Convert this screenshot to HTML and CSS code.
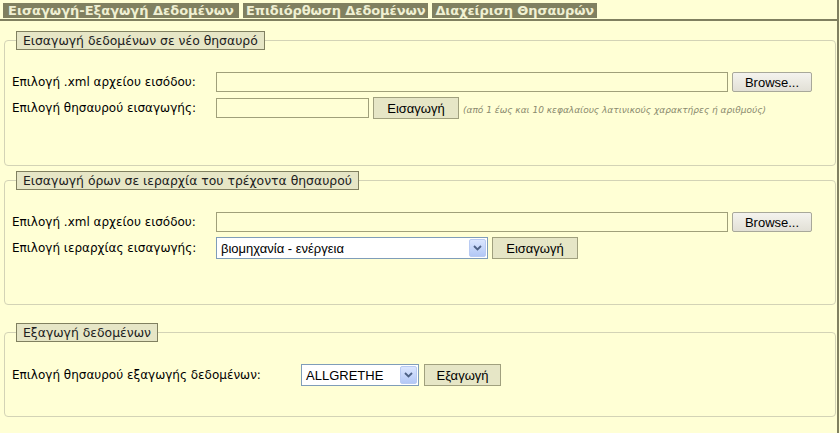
FILE: index.html
```html
<!DOCTYPE html>
<html lang="el">
<head>
<meta charset="utf-8">
<title>Εισαγωγή-Εξαγωγή Δεδομένων</title>
<link rel="stylesheet" href="styles.css">
</head>
<body>
<div class="page">
  <nav class="tabs">
    <a class="tab">Εισαγωγή-Εξαγωγή Δεδομένων</a>
    <a class="tab tab-sm">Επιδιόρθωση Δεδομένων</a>
    <a class="tab tab-sm">Διαχείριση Θησαυρών</a>
  </nav>
  <div class="content">
    <fieldset class="box box-new">
      <legend>Εισαγωγή δεδομένων σε νέο θησαυρό</legend>
      <div class="rows">
        <div class="row">
          <label class="lbl">Επιλογή .xml αρχείου εισόδου:</label>
          <input class="txt file" type="text">
          <button class="browse" type="button">Browse...</button>
        </div>
        <div class="row">
          <label class="lbl">Επιλογή θησαυρού εισαγωγής:</label>
          <input class="txt short" type="text">
          <button class="btn btn-import" type="button">Εισαγωγή</button>
          <span class="note">(από 1 έως και 10 κεφαλαίους λατινικούς χαρακτήρες ή αριθμούς)</span>
        </div>
      </div>
    </fieldset>

    <fieldset class="box box-terms">
      <legend>Εισαγωγή όρων σε ιεραρχία του τρέχοντα θησαυρού</legend>
      <div class="rows">
        <div class="row">
          <label class="lbl">Επιλογή .xml αρχείου εισόδου:</label>
          <input class="txt file" type="text">
          <button class="browse" type="button">Browse...</button>
        </div>
        <div class="row">
          <label class="lbl">Επιλογή ιεραρχίας εισαγωγής:</label>
          <div class="select sel-wide">
            <span class="sel-text">βιομηχανία - ενέργεια</span>
            <span class="sel-arrow"><svg width="9" height="6" viewBox="0 0 9 6"><path d="M1 1 L4.5 4.5 L8 1" fill="none" stroke="#4d6185" stroke-width="1.8"/></svg></span>
          </div>
          <button class="btn btn-import" type="button">Εισαγωγή</button>
        </div>
      </div>
    </fieldset>

    <fieldset class="box box-export">
      <legend>Εξαγωγή δεδομένων</legend>
      <div class="rows">
        <div class="row">
          <label class="lbl lbl-wide">Επιλογή θησαυρού εξαγωγής δεδομένων:</label>
          <div class="select sel-narrow">
            <span class="sel-text">ALLGRETHE</span>
            <span class="sel-arrow"><svg width="9" height="6" viewBox="0 0 9 6"><path d="M1 1 L4.5 4.5 L8 1" fill="none" stroke="#4d6185" stroke-width="1.8"/></svg></span>
          </div>
          <button class="btn btn-export" type="button">Εξαγωγή</button>
        </div>
      </div>
    </fieldset>
  </div>
</div>
</body>
</html>
```

FILE: styles.css
```css
html, body {
  margin: 0;
  padding: 0;
}

body {
  background: #ffffd5;
  font-family: "DejaVu Sans", Verdana, sans-serif;
  color: #000;
}

.page {
  box-sizing: border-box;
  width: 839px;
  min-height: 433px;
  border-right: 2px solid #808060;
}

.tabs {
  display: flex;
  gap: 4px;
  padding: 3px 0 1px 3px;
  border-bottom: 2px solid #808060;
}

.tab {
  background: #808060;
  color: #f0f0d2;
  font-weight: bold;
  font-size: 13px;
  height: 15px;
  line-height: 15px;
  padding: 0 5px;
  white-space: nowrap;
}

.tab-sm {
  padding: 0 3px;
  letter-spacing: -0.1px;
}

.content {
  padding: 10px 1px 0 4px;
}

.box {
  margin: 0;
  border: 1px solid #d3d3b6;
  border-radius: 4px;
  padding: 0 7px;
}

.box-new {
  padding-bottom: 46px;
}

.box-terms {
  margin-top: 5px;
  padding-bottom: 45px;
}

.box-export {
  margin-top: 18px;
  padding-bottom: 30px;
}

legend {
  box-sizing: border-box;
  margin-left: 4px;
  height: 19px;
  line-height: 17px;
  padding: 0 6px;
  background: #e6e6c6;
  border: 1px solid #808060;
  font-size: 12.4px;
  color: #202020;
}

.rows {
  display: flex;
  flex-direction: column;
  gap: 5px;
  margin-top: 22px;
}

.row {
  display: flex;
  align-items: center;
  gap: 4px;
  font-size: 12px;
}

.lbl {
  width: 200px;
  flex: none;
  white-space: nowrap;
}

.lbl-wide {
  width: 285px;
}

.txt {
  box-sizing: border-box;
  height: 20px;
  border: 1px solid #a0a07a;
  background: transparent;
  margin: 0;
  padding: 0 2px;
}

.file {
  width: 512px;
}

.short {
  width: 153px;
}

.browse {
  box-sizing: border-box;
  width: 80px;
  height: 20px;
  margin: 0;
  padding: 0;
  border: 1px solid #a8a89a;
  border-radius: 2px;
  background: linear-gradient(#f4f3ee, #e2e0d6);
  font-family: "Liberation Sans", Arial, sans-serif;
  font-size: 13px;
  color: #000;
}

.btn {
  box-sizing: border-box;
  height: 22px;
  margin: 0;
  padding: 0;
  border: 1px solid #a0a07e;
  background: #e6e6c6;
  font-family: "Liberation Sans", Arial, sans-serif;
  font-size: 13px;
  color: #000;
}

.btn-import {
  width: 86px;
}

.btn-export {
  width: 77px;
  margin-left: 1px;
}

.note {
  font-style: italic;
  font-size: 9px;
  color: #8a8a6e;
  white-space: nowrap;
  padding-top: 4px;
}

.select {
  box-sizing: border-box;
  display: flex;
  align-items: center;
  height: 22px;
  border: 1px solid #7f9db9;
  background: #fff;
  padding: 1px;
  font-family: "Liberation Sans", Arial, sans-serif;
  font-size: 13px;
}

.sel-wide {
  width: 272px;
}

.sel-narrow {
  width: 118px;
}

.sel-text {
  flex: 1;
  padding-left: 3px;
}

.sel-arrow {
  box-sizing: border-box;
  display: flex;
  align-items: center;
  justify-content: center;
  width: 17px;
  height: 18px;
  border: 1px solid #b9cbf3;
  border-radius: 2px;
  background: linear-gradient(#dbe6fe, #b3c8f6);
}
```
